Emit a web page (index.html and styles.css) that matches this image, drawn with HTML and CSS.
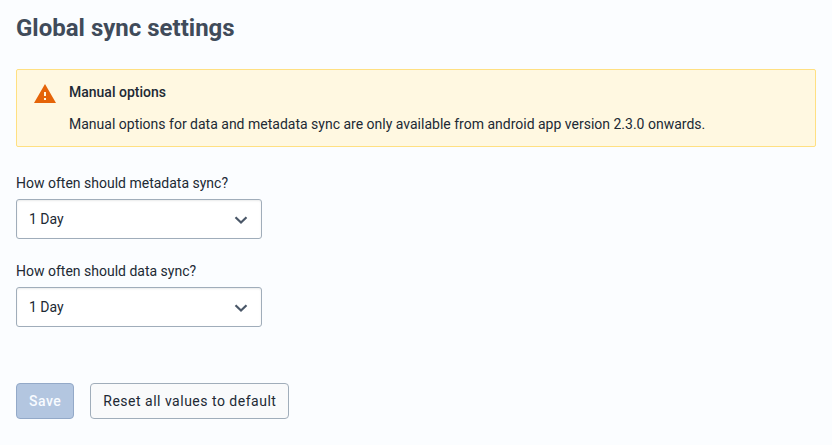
FILE: index.html
```html
<!DOCTYPE html>
<html lang="en">
<head>
<meta charset="utf-8">
<title>Global sync settings</title>
<link rel="stylesheet" href="styles.css">
</head>
<body>
<main class="page">
  <h1 class="title">Global sync settings</h1>
  <section class="notice">
    <svg class="notice-icon" viewBox="0 0 24 24"><path d="M1 21h22L12 2 1 21zm12-3h-2v-2h2v2zm0-4h-2v-4h2v4z"/></svg>
    <div>
      <h2 class="notice-title">Manual options</h2>
      <p class="notice-text">Manual options for data and metadata sync are only available from android app version 2.3.0 onwards.</p>
    </div>
  </section>
  <div class="field">
    <label class="label">How often should metadata sync?</label>
    <div class="select" role="button"><span>1 Day</span><svg class="chevron" viewBox="0 0 14 14"><path d="M1.500 5.200 7 10.500l5.500-5.300"/></svg></div>
  </div>
  <div class="field">
    <label class="label">How often should data sync?</label>
    <div class="select" role="button"><span>1 Day</span><svg class="chevron" viewBox="0 0 14 14"><path d="M1.500 5.200 7 10.500l5.500-5.300"/></svg></div>
  </div>
  <div class="actions">
    <button class="button save" disabled>Save</button>
    <button class="button">Reset all values to default</button>
  </div>
</main>
</body>
</html>
```

FILE: styles.css
```css
* { box-sizing: border-box; }
body { margin: 0; background: #fbfdff; color: #212934; font: 14px/19px Roboto, sans-serif; }
.page { padding: 13px 16px; }
.title { margin: 0; font-size: 24px; line-height: 30px; font-weight: 700; color: #404b5a; }
.notice { display: flex; gap: 12px; height: 78px; margin-top: 26px; padding: 13px 16px; border: 1px solid #ffe082; border-radius: 2px; background: #fff8e1; }
.notice-icon { width: 24px; height: 24px; margin-top: -1px; fill: #e56408; }
.notice-title { margin: 0 0 13px; font-size: 14px; line-height: 19px; font-weight: 500; }
.notice-text { margin: 0; }
.field { margin-top: 27px; }
.field + .field { margin-top: 23px; }
.label { display: block; line-height: 19px; margin-bottom: 6px; }
.select { display: flex; align-items: center; justify-content: space-between; width: 246px; height: 40px; padding: 0 13px 0 12px; border: 1px solid #a0adba; border-radius: 3px; background: #fff; box-shadow: inset 0 1px 2px rgba(48,54,60,.1); }
.chevron { width: 14px; height: 14px; fill: none; stroke: #4a5768; stroke-width: 2.2; }
.actions { display: flex; gap: 16px; margin-top: 56px; }
.button { height: 36px; padding: 0 12px; border: 1px solid #a0adba; border-radius: 4px; background: #f9fafb; color: #212934; font: 14px/16px Roboto, sans-serif; letter-spacing: .5px; }
.save { border-color: #93a9c8; background: #b3c6e0; color: #f8fbff; font-weight: 500; }
```
